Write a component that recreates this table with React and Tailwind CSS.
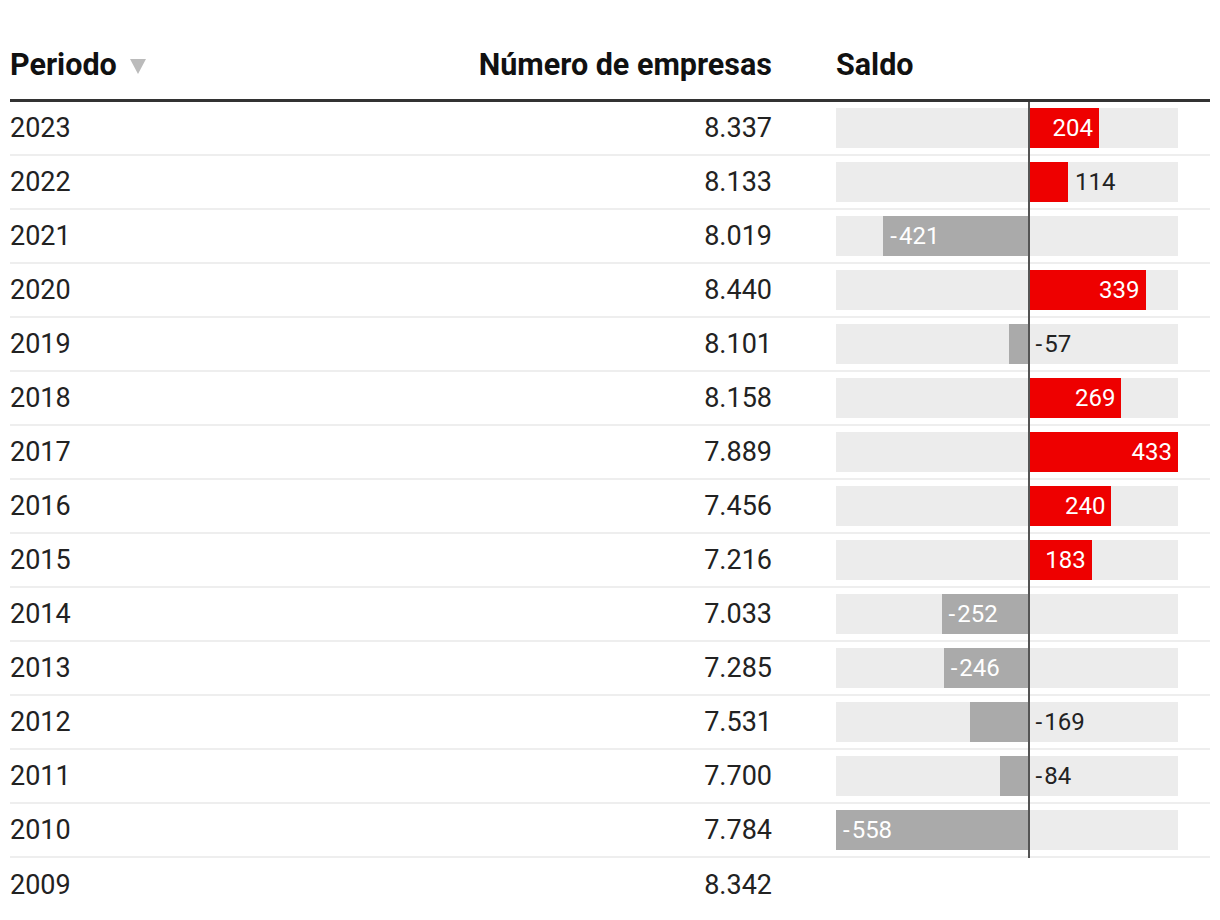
import React from 'react'

const rows = [
  { year: '2023', total: '8.337', saldo: 204 },
  { year: '2022', total: '8.133', saldo: 114 },
  { year: '2021', total: '8.019', saldo: -421 },
  { year: '2020', total: '8.440', saldo: 339 },
  { year: '2019', total: '8.101', saldo: -57 },
  { year: '2018', total: '8.158', saldo: 269 },
  { year: '2017', total: '7.889', saldo: 433 },
  { year: '2016', total: '7.456', saldo: 240 },
  { year: '2015', total: '7.216', saldo: 183 },
  { year: '2014', total: '7.033', saldo: -252 },
  { year: '2013', total: '7.285', saldo: -246 },
  { year: '2012', total: '7.531', saldo: -169 },
  { year: '2011', total: '7.700', saldo: -84 },
  { year: '2010', total: '7.784', saldo: -558 },
  { year: '2009', total: '8.342', saldo: null },
]

const MIN = -558
const MAX = 433
const W = 342
const scale = W / (MAX - MIN)
const zero = -MIN * scale

function Label({ value }) {
  if (value >= 0) return <span>{value}</span>
  return (
    <span className="flex items-center">
      <span className="mr-[2px]">-</span>
      {Math.abs(value)}
    </span>
  )
}

function SaldoBar({ value }) {
  const width = Math.abs(value) * scale
  const inside = Math.abs(value) >= 180
  return (
    <div className="relative h-[40px] w-[342px] bg-[#ececec]">
      {value >= 0 ? (
        <div
          className="absolute top-0 bottom-0 flex items-center justify-end bg-[#ee0000] pr-[6px]"
          style={{ left: zero, width }}
        >
          {inside && <span className="text-white"><Label value={value} /></span>}
        </div>
      ) : (
        <div
          className="absolute top-0 bottom-0 flex items-center bg-[#aaaaaa] pl-[7px]"
          style={{ left: zero - width, width }}
        >
          {inside && <span className="text-white"><Label value={value} /></span>}
        </div>
      )}
      {!inside && (
        <span
          className="absolute top-0 bottom-0 flex items-center text-[#222]"
          style={{ left: (value >= 0 ? zero + width : zero) + 7 }}
        >
          <Label value={value} />
        </span>
      )}
    </div>
  )
}

export default function App() {
  return (
    <div className="min-h-screen bg-white px-[10px] pt-[33px] font-['Roboto',sans-serif] text-[#222]">
      <div className="flex h-[69px] items-center border-b-[3px] border-[#333] pb-[3px] text-[30.5px] font-bold text-[#111]">
        <div className="flex w-[462px] items-center gap-[13px]">
          <span>Periodo</span>
          <svg width="16" height="15" viewBox="0 0 16 15" className="mt-[3px]">
            <polygon points="0,0 16,0 8,15" fill="#bbbbbb" />
          </svg>
        </div>
        <div className="w-[300px] text-right">Número de empresas</div>
        <div className="w-[438px] pl-[64px]">Saldo</div>
      </div>
      {rows.map((r) => (
        <div
          key={r.year}
          className={`relative flex h-[54px] items-center text-[27px] ${
            r.saldo !== null ? 'border-b-2 border-[#eeeeee]' : ''
          }`}
        >
          <div className="w-[462px]">{r.year}</div>
          <div className="w-[300px] text-right">{r.total}</div>
          <div className="w-[438px] pl-[64px] text-[24px]">
            {r.saldo !== null && <SaldoBar value={r.saldo} />}
          </div>
          {r.saldo !== null && (
            <div className="absolute top-0 bottom-[-2px] left-[1018px] w-[2px] bg-[#555]" />
          )}
        </div>
      ))}
    </div>
  )
}
